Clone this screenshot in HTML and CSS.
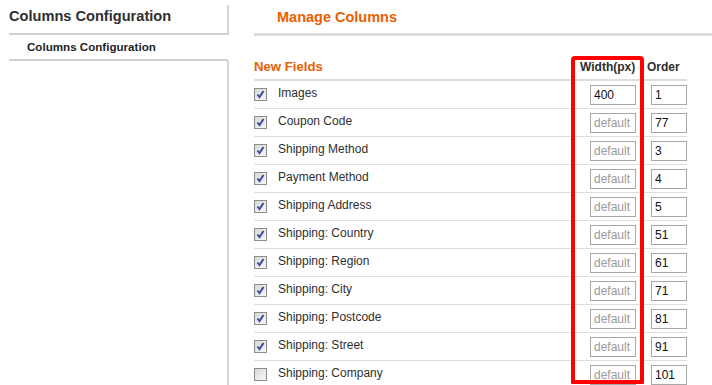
FILE: index.html
```html
<!DOCTYPE html>
<html>
<head>
<meta charset="utf-8">
<link rel="stylesheet" href="styles.css">
</head>
<body>
<div class="page">
  <aside class="sidebar">
    <div class="side-title">Columns Configuration</div>
    <div class="side-item">Columns Configuration</div>
    <div class="side-rest"></div>
  </aside>
  <main class="main">
    <div class="main-head">Manage Columns</div>
    <div class="table">
      <div class="row head">
        <div class="c-label">New Fields</div>
        <div class="c-w">Width(px)</div>
        <div class="c-o">Order</div>
      </div>
      <div class="row"><span class="cb on"><svg viewBox="0 0 11 11"><path d="M2.5 5.5 L4.5 8 L8.5 2"/></svg></span><div class="c-label">Images</div><div class="c-w"><input class="in-w" value="400"></div><div class="c-o"><input class="in-o" value="1"></div></div>
      <div class="row"><span class="cb on"><svg viewBox="0 0 11 11"><path d="M2.5 5.5 L4.5 8 L8.5 2"/></svg></span><div class="c-label">Coupon Code</div><div class="c-w"><input class="in-w" placeholder="default"></div><div class="c-o"><input class="in-o" value="77"></div></div>
      <div class="row"><span class="cb on"><svg viewBox="0 0 11 11"><path d="M2.5 5.5 L4.5 8 L8.5 2"/></svg></span><div class="c-label">Shipping Method</div><div class="c-w"><input class="in-w" placeholder="default"></div><div class="c-o"><input class="in-o" value="3"></div></div>
      <div class="row"><span class="cb on"><svg viewBox="0 0 11 11"><path d="M2.5 5.5 L4.5 8 L8.5 2"/></svg></span><div class="c-label">Payment Method</div><div class="c-w"><input class="in-w" placeholder="default"></div><div class="c-o"><input class="in-o" value="4"></div></div>
      <div class="row"><span class="cb on"><svg viewBox="0 0 11 11"><path d="M2.5 5.5 L4.5 8 L8.5 2"/></svg></span><div class="c-label">Shipping Address</div><div class="c-w"><input class="in-w" placeholder="default"></div><div class="c-o"><input class="in-o" value="5"></div></div>
      <div class="row"><span class="cb on"><svg viewBox="0 0 11 11"><path d="M2.5 5.5 L4.5 8 L8.5 2"/></svg></span><div class="c-label">Shipping: Country</div><div class="c-w"><input class="in-w" placeholder="default"></div><div class="c-o"><input class="in-o" value="51"></div></div>
      <div class="row"><span class="cb on"><svg viewBox="0 0 11 11"><path d="M2.5 5.5 L4.5 8 L8.5 2"/></svg></span><div class="c-label">Shipping: Region</div><div class="c-w"><input class="in-w" placeholder="default"></div><div class="c-o"><input class="in-o" value="61"></div></div>
      <div class="row"><span class="cb on"><svg viewBox="0 0 11 11"><path d="M2.5 5.5 L4.5 8 L8.5 2"/></svg></span><div class="c-label">Shipping: City</div><div class="c-w"><input class="in-w" placeholder="default"></div><div class="c-o"><input class="in-o" value="71"></div></div>
      <div class="row"><span class="cb on"><svg viewBox="0 0 11 11"><path d="M2.5 5.5 L4.5 8 L8.5 2"/></svg></span><div class="c-label">Shipping: Postcode</div><div class="c-w"><input class="in-w" placeholder="default"></div><div class="c-o"><input class="in-o" value="81"></div></div>
      <div class="row"><span class="cb on"><svg viewBox="0 0 11 11"><path d="M2.5 5.5 L4.5 8 L8.5 2"/></svg></span><div class="c-label">Shipping: Street</div><div class="c-w"><input class="in-w" placeholder="default"></div><div class="c-o"><input class="in-o" value="91"></div></div>
      <div class="row"><span class="cb"></span><div class="c-label">Shipping: Company</div><div class="c-w"><input class="in-w" placeholder="default"></div><div class="c-o"><input class="in-o" value="101"></div></div>
      <div class="highlight"></div>
    </div>
  </main>
</div>
</body>
</html>
```
FILE: styles.css
```css
* { box-sizing: border-box; }
html, body { margin: 0; padding: 0; background: #fff; overflow: hidden; }
body { font-family: "Liberation Sans", Arial, sans-serif; font-size: 12px; color: #2f2f2f; }

.page { display: flex; padding-left: 9px; height: 385px; }

.sidebar { width: 220px; flex: none; display: flex; flex-direction: column; }
.side-title {
  margin-top: 5px; height: 30px; padding-top: 3px;
  font-size: 14.6px; font-weight: bold; color: #2f2f2f; line-height: 16px;
  border-bottom: 2px solid #d0d0d0; border-right: 2px solid #d4d4d4;
}
.side-item {
  height: 26px; padding-left: 18px; padding-top: 5px;
  font-size: 11.6px; font-weight: bold; color: #1f1f1f; line-height: 14px;
  border-bottom: 2px solid #d0d0d0; border-right: 2px solid transparent;
}
.side-rest { flex: 1; border-right: 2px solid #d4d4d4; }

.main { flex: 1; padding-left: 25px; position: relative; }
.main-head {
  height: 36px; padding: 7px 0 0 23px; line-height: 20px;
  font-size: 14.5px; font-weight: bold; color: #eb5e00;
  border-bottom: 3px solid #dcdcdc;
}

.table { width: 433px; margin-top: 20px; position: relative; }
.row {
  display: grid; grid-template-columns: 24px 1fr 67px 40px;
  align-items: center; height: 28px; border-bottom: 1px solid #dedede;
}
.row.head { height: 25px; border-bottom: 2px solid #dedede; padding-bottom: 2px; }
.row.head .c-label { grid-column: 1 / 3; font-size: 13.2px; font-weight: bold; color: #eb5e00; padding-bottom: 0; }
.row.head .c-w, .row.head .c-o { font-weight: bold; color: #2f2f2f; }
.c-label { color: #2f2f2f; padding-bottom: 3px; }

.cb {
  width: 13px; height: 13px; border: 1px solid #8c8c8c; margin-top: -1px;
  background: linear-gradient(135deg, #d8d8d8, #f8f8f8);
  display: block;
}
.cb svg { width: 11px; height: 11px; display: block; fill: none; stroke: #3a4f9a; stroke-width: 2; }

input {
  font-family: "Liberation Sans", Arial, sans-serif; font-size: 12px; color: #111;
  height: 20px; border: 1px solid #a8a8a8; border-radius: 0; padding: 0 3px; margin: 0; outline: none;
  display: block;
}
input::placeholder { color: #999; }
.in-w { width: 46px; margin-left: 10px; }
.in-o { width: 36px; margin-left: 4px; }

.highlight {
  position: absolute; left: 317px; top: 0; width: 73px; height: 328px;
  border: 4px solid #ff0000; border-radius: 4px 4px 1px 1px; pointer-events: none;
}
```
